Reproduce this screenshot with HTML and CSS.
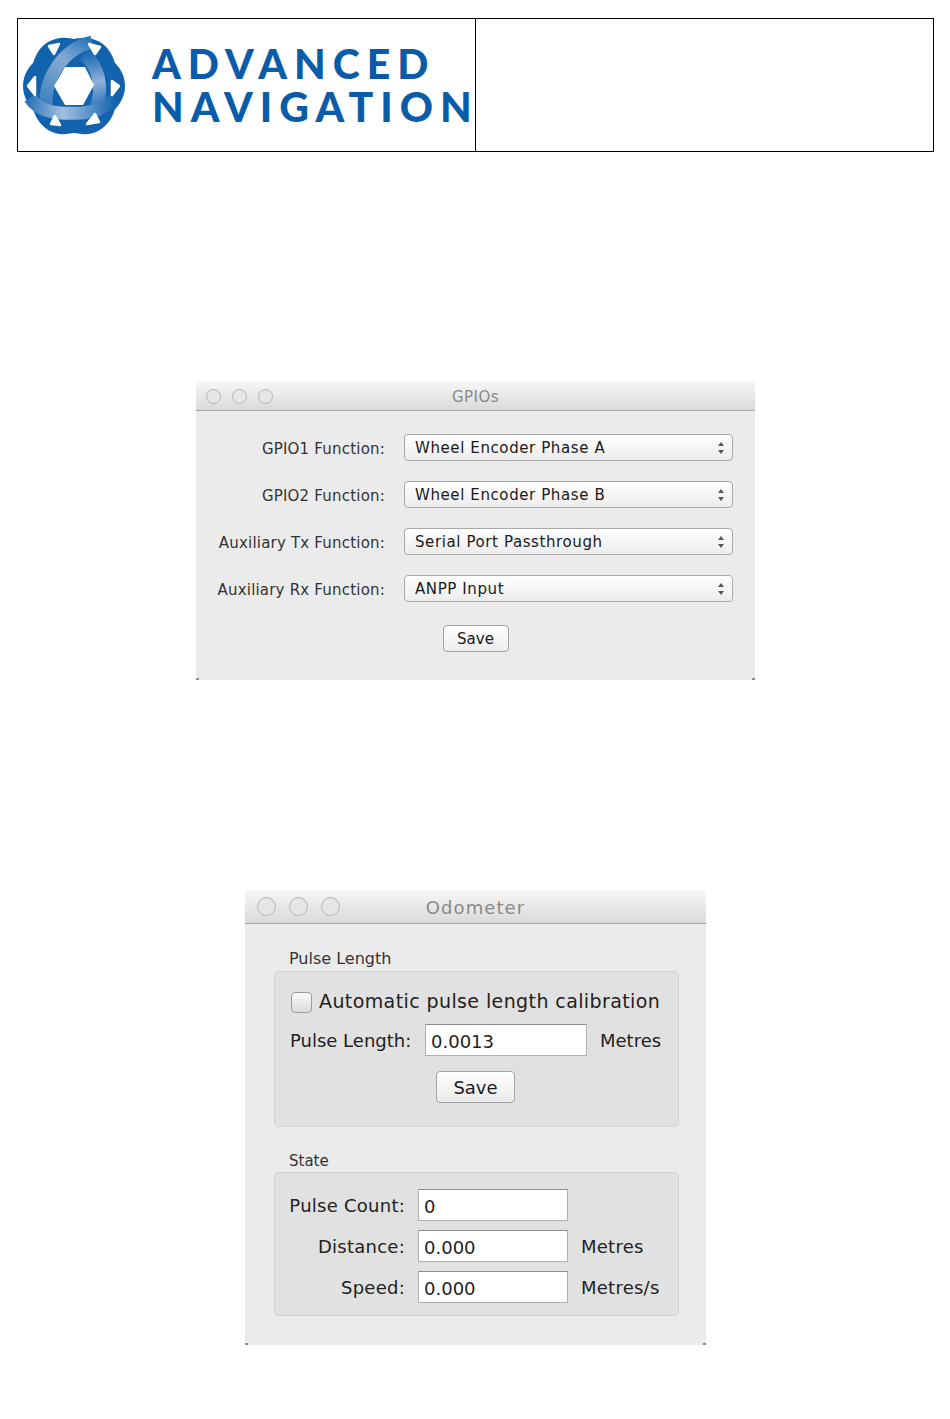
FILE: index.html
```html
<!DOCTYPE html>
<html lang="en">
<head>
    <meta charset="UTF-8">
    <title>GPIOs and Odometer</title>
    <link rel="stylesheet" href="styles.css">
</head>
<body>
    <header class="doc-header">
        <div class="brand">
            <svg class="brand-mark" viewBox="0 0 104 104" width="104" height="104">
                <defs>
                    <linearGradient id="band-low" gradientUnits="userSpaceOnUse" x1="6" y1="66" x2="94" y2="70">
                        <stop offset="0" stop-color="#2a73b8"/>
                        <stop offset="0.4" stop-color="#a3c0de"/>
                        <stop offset="0.75" stop-color="#4e8ac6"/>
                        <stop offset="1" stop-color="#1262ad"/>
                    </linearGradient>
                    <linearGradient id="band-up" gradientUnits="userSpaceOnUse" x1="24" y1="72" x2="70" y2="8">
                        <stop offset="0" stop-color="#3b80bf"/>
                        <stop offset="0.6" stop-color="#86abd3"/>
                        <stop offset="1" stop-color="#2e76ba"/>
                    </linearGradient>
                    <linearGradient id="band-right" gradientUnits="userSpaceOnUse" x1="62" y1="20" x2="74" y2="74">
                        <stop offset="0" stop-color="#1c69b3"/>
                        <stop offset="0.55" stop-color="#8fb1d6"/>
                        <stop offset="1" stop-color="#2a72b8"/>
                    </linearGradient>
                </defs>
                <g class="brand-base">
                    <ellipse cx="52" cy="52" rx="51" ry="39"/>
                    <ellipse cx="52" cy="52" rx="51" ry="39" transform="rotate(60 52 52)"/>
                    <ellipse cx="52" cy="52" rx="51" ry="39" transform="rotate(120 52 52)"/>
                </g>
                <g fill="none" stroke-width="13">
                    <path d="M62 20 C76 32 82 52 74 74" stroke="url(#band-right)"/>
                    <path d="M24 72 C22 48 38 16 70 8" stroke="url(#band-up)"/>
                    <path d="M8 64 C18 80 40 80 60 79 C72 78 84 74 93 64" stroke="url(#band-low)"/>
                </g>
                <path class="brand-hex" d="M32 52 L43 33 H63 L72 51 L61 71 H43 Z"/>
                <g class="brand-holes">
                    <path d="M27 12 L37 10 L32 20 Z"/>
                    <path d="M67 10 L78 13 L73 20 Z"/>
                    <path d="M6 52 L13 43 L13 61 Z"/>
                    <path d="M90 47 L97 52 L90 61 Z"/>
                    <path d="M29 90 L38 91 L33 82 Z"/>
                    <path d="M65 90 L77 88 L73 80 Z"/>
                </g>
            </svg>
            <div class="brand-name">ADVANCED<br>NAVIGATION</div>
        </div>
        <div class="header-blank"></div>
    </header>

    <section class="window gpio-window">
        <div class="titlebar">
            <div class="traffic">
                <span class="dot"></span>
                <span class="dot"></span>
                <span class="dot"></span>
            </div>
            <span class="title">GPIOs</span>
        </div>
        <div class="gpio-form">
            <label class="gpio-label">GPIO1 Function:</label>
            <div class="select"><span>Wheel Encoder Phase A</span><i class="stepper"></i></div>
            <label class="gpio-label">GPIO2 Function:</label>
            <div class="select"><span>Wheel Encoder Phase B</span><i class="stepper"></i></div>
            <label class="gpio-label">Auxiliary Tx Function:</label>
            <div class="select"><span>Serial Port Passthrough</span><i class="stepper"></i></div>
            <label class="gpio-label">Auxiliary Rx Function:</label>
            <div class="select"><span>ANPP Input</span><i class="stepper"></i></div>
        </div>
        <button class="btn gpio-save">Save</button>
    </section>

    <section class="window odo-window">
        <div class="titlebar">
            <div class="traffic">
                <span class="dot"></span>
                <span class="dot"></span>
                <span class="dot"></span>
            </div>
            <span class="title">Odometer</span>
        </div>
        <div class="odo-body">
            <div class="group-title">Pulse Length</div>
            <div class="group pulse-group">
                <div class="check-row">
                    <span class="checkbox"></span>
                    <span>Automatic pulse length calibration</span>
                </div>
                <div class="pulse-row">
                    <label>Pulse Length:</label>
                    <input class="field pulse-field" type="text" value="0.0013">
                    <span>Metres</span>
                </div>
                <button class="btn odo-save">Save</button>
            </div>
            <div class="group-title state-title">State</div>
            <div class="group state-group">
                <label>Pulse Count:</label>
                <input class="field" type="text" value="0">
                <span></span>
                <label>Distance:</label>
                <input class="field" type="text" value="0.000">
                <span>Metres</span>
                <label>Speed:</label>
                <input class="field" type="text" value="0.000">
                <span>Metres/s</span>
            </div>
        </div>
    </section>
</body>
</html>
```
FILE: styles.css
```css
* {
    box-sizing: border-box;
    margin: 0;
    padding: 0;
}

body {
    height: 1419px;
    padding: 18px 16px 0 17px;
    background-color: #fff;
    color: #222;
    font-family: 'DejaVu Sans', sans-serif;
    overflow: hidden;
}

.doc-header {
    display: flex;
    height: 134px;
    border: 1px solid #000;
}

.brand {
    flex: none;
    width: 458px;
    display: flex;
    align-items: center;
    padding-left: 4px;
    border-right: 1px solid #000;
}

.brand-mark {
    flex: none;
    margin-top: 2px;
}

.brand-base {
    fill: #1262ad;
}

.brand-hex {
    fill: #fff;
}

.brand-holes {
    fill: #fff;
    stroke: #fff;
    stroke-width: 2.5;
    stroke-linejoin: round;
}

.brand-name {
    flex: none;
    margin-left: 26px;
    font-family: 'Lato', sans-serif;
    font-weight: 900;
    font-size: 41px;
    line-height: 43px;
    letter-spacing: 7px;
    white-space: nowrap;
    color: #0b5ca8;
}

.header-blank {
    flex: 1;
}

/* mac style windows */
.window {
    position: relative;
    margin-left: auto;
    margin-right: auto;
    background-color: #ebebeb;
    border-radius: 4px 4px 0 0;
}

.window::before,
.window::after {
    content: '';
    position: absolute;
    bottom: 0;
    width: 3px;
    height: 2px;
    background-color: #8c8c8c;
}

.window::before {
    left: 0;
}

.window::after {
    right: 0;
}

.gpio-window {
    width: 559px;
    height: 299px;
    margin-top: 229px;
}

.odo-window {
    width: 461px;
    height: 455px;
    margin-top: 210px;
}

.titlebar {
    position: relative;
    display: flex;
    align-items: center;
    justify-content: center;
    height: 30px;
    padding-top: 2px;
    background: linear-gradient(#f7f7f7, #dadada);
    border-bottom: 1px solid #a6a6a6;
}

.odo-window .titlebar {
    height: 34px;
}

.traffic {
    position: absolute;
    left: 10px;
    top: 8px;
    display: flex;
    gap: 11px;
}

.odo-window .traffic {
    left: 12px;
    top: 7px;
    gap: 13px;
}

.dot {
    width: 15px;
    height: 15px;
    border: 1px solid #b4b4b4;
    border-radius: 50%;
    background-color: #e6e6e6;
}

.odo-window .dot {
    width: 19px;
    height: 19px;
}

.title {
    font-size: 15px;
    letter-spacing: 0.5px;
    color: #8a8a8a;
}

.odo-window .title {
    font-size: 18px;
    letter-spacing: 1.1px;
}

/* gpio form */
.gpio-form {
    display: grid;
    grid-template-columns: 189px 329px;
    column-gap: 19px;
    row-gap: 20px;
    align-items: center;
    padding-top: 23px;
}

.gpio-label {
    padding-top: 2px;
    text-align: right;
    font-size: 15px;
    letter-spacing: 0.2px;
    color: #333;
    white-space: nowrap;
}

.select {
    display: flex;
    align-items: center;
    justify-content: space-between;
    height: 27px;
    padding: 0 8px 0 10px;
    border: 1px solid #a9a9a9;
    border-radius: 4px;
    background: linear-gradient(#fff, #ececec);
    font-size: 15px;
    letter-spacing: 0.6px;
    color: #1a1a1a;
}

.stepper {
    position: relative;
    width: 6px;
    height: 12px;
}

.stepper::before,
.stepper::after {
    content: '';
    position: absolute;
    left: 0;
    border-left: 3px solid transparent;
    border-right: 3px solid transparent;
}

.stepper::before {
    top: 0;
    border-bottom: 4px solid #555;
}

.stepper::after {
    bottom: 0;
    border-top: 4px solid #555;
}

.btn {
    display: block;
    margin: 0 auto;
    border: 1px solid #a4a4a4;
    border-radius: 4px;
    background: linear-gradient(#fff, #ebebeb);
    font-family: inherit;
    color: #1a1a1a;
}

.gpio-save {
    width: 66px;
    height: 27px;
    margin-top: 23px;
    font-size: 15px;
}

/* odometer */
.odo-body {
    padding: 25px 27px 0 29px;
}

.group-title {
    height: 22px;
    padding-left: 15px;
    font-size: 16px;
    color: #333;
}

.state-title {
    margin-top: 24px;
    height: 21px;
    padding-top: 1px;
    font-size: 15px;
}

.group {
    border: 1px solid #d0d0d0;
    border-radius: 5px;
    background-color: #e1e1e1;
    font-size: 18px;
    color: #222;
}

.pulse-group {
    height: 156px;
    padding: 19px 19px 0 15px;
}

.check-row {
    display: flex;
    align-items: center;
    gap: 7px;
    height: 22px;
    padding-left: 1px;
    font-size: 19px;
    letter-spacing: 0.4px;
    white-space: nowrap;
}

.check-row span:last-child {
    margin-top: -2px;
}

.checkbox {
    flex: none;
    width: 21px;
    height: 21px;
    border: 1px solid #9c9c9c;
    border-radius: 4px;
    background: linear-gradient(#fafafa, #dcdcdc);
}

.pulse-row {
    display: grid;
    grid-template-columns: 122px 162px 1fr;
    column-gap: 13px;
    align-items: center;
    margin-top: 11px;
    white-space: nowrap;
}

.pulse-row span {
    text-align: right;
}

.field {
    height: 32px;
    width: 100%;
    padding: 2px 5px 0;
    border: 1px solid #b0b0b0;
    border-top-color: #8e8e8e;
    background-color: #fff;
    font-family: inherit;
    font-size: 18px;
    color: #222;
}

.odo-save {
    width: 79px;
    height: 32px;
    margin: 15px 0 0 146px;
    font-size: 18px;
}

.state-group {
    display: grid;
    grid-template-columns: 120px 150px 1fr;
    column-gap: 13px;
    row-gap: 9px;
    align-items: center;
    align-content: start;
    height: 144px;
    padding: 16px 12px 0 10px;
    letter-spacing: 0.25px;
    white-space: nowrap;
}

.state-group label {
    text-align: right;
}
```
